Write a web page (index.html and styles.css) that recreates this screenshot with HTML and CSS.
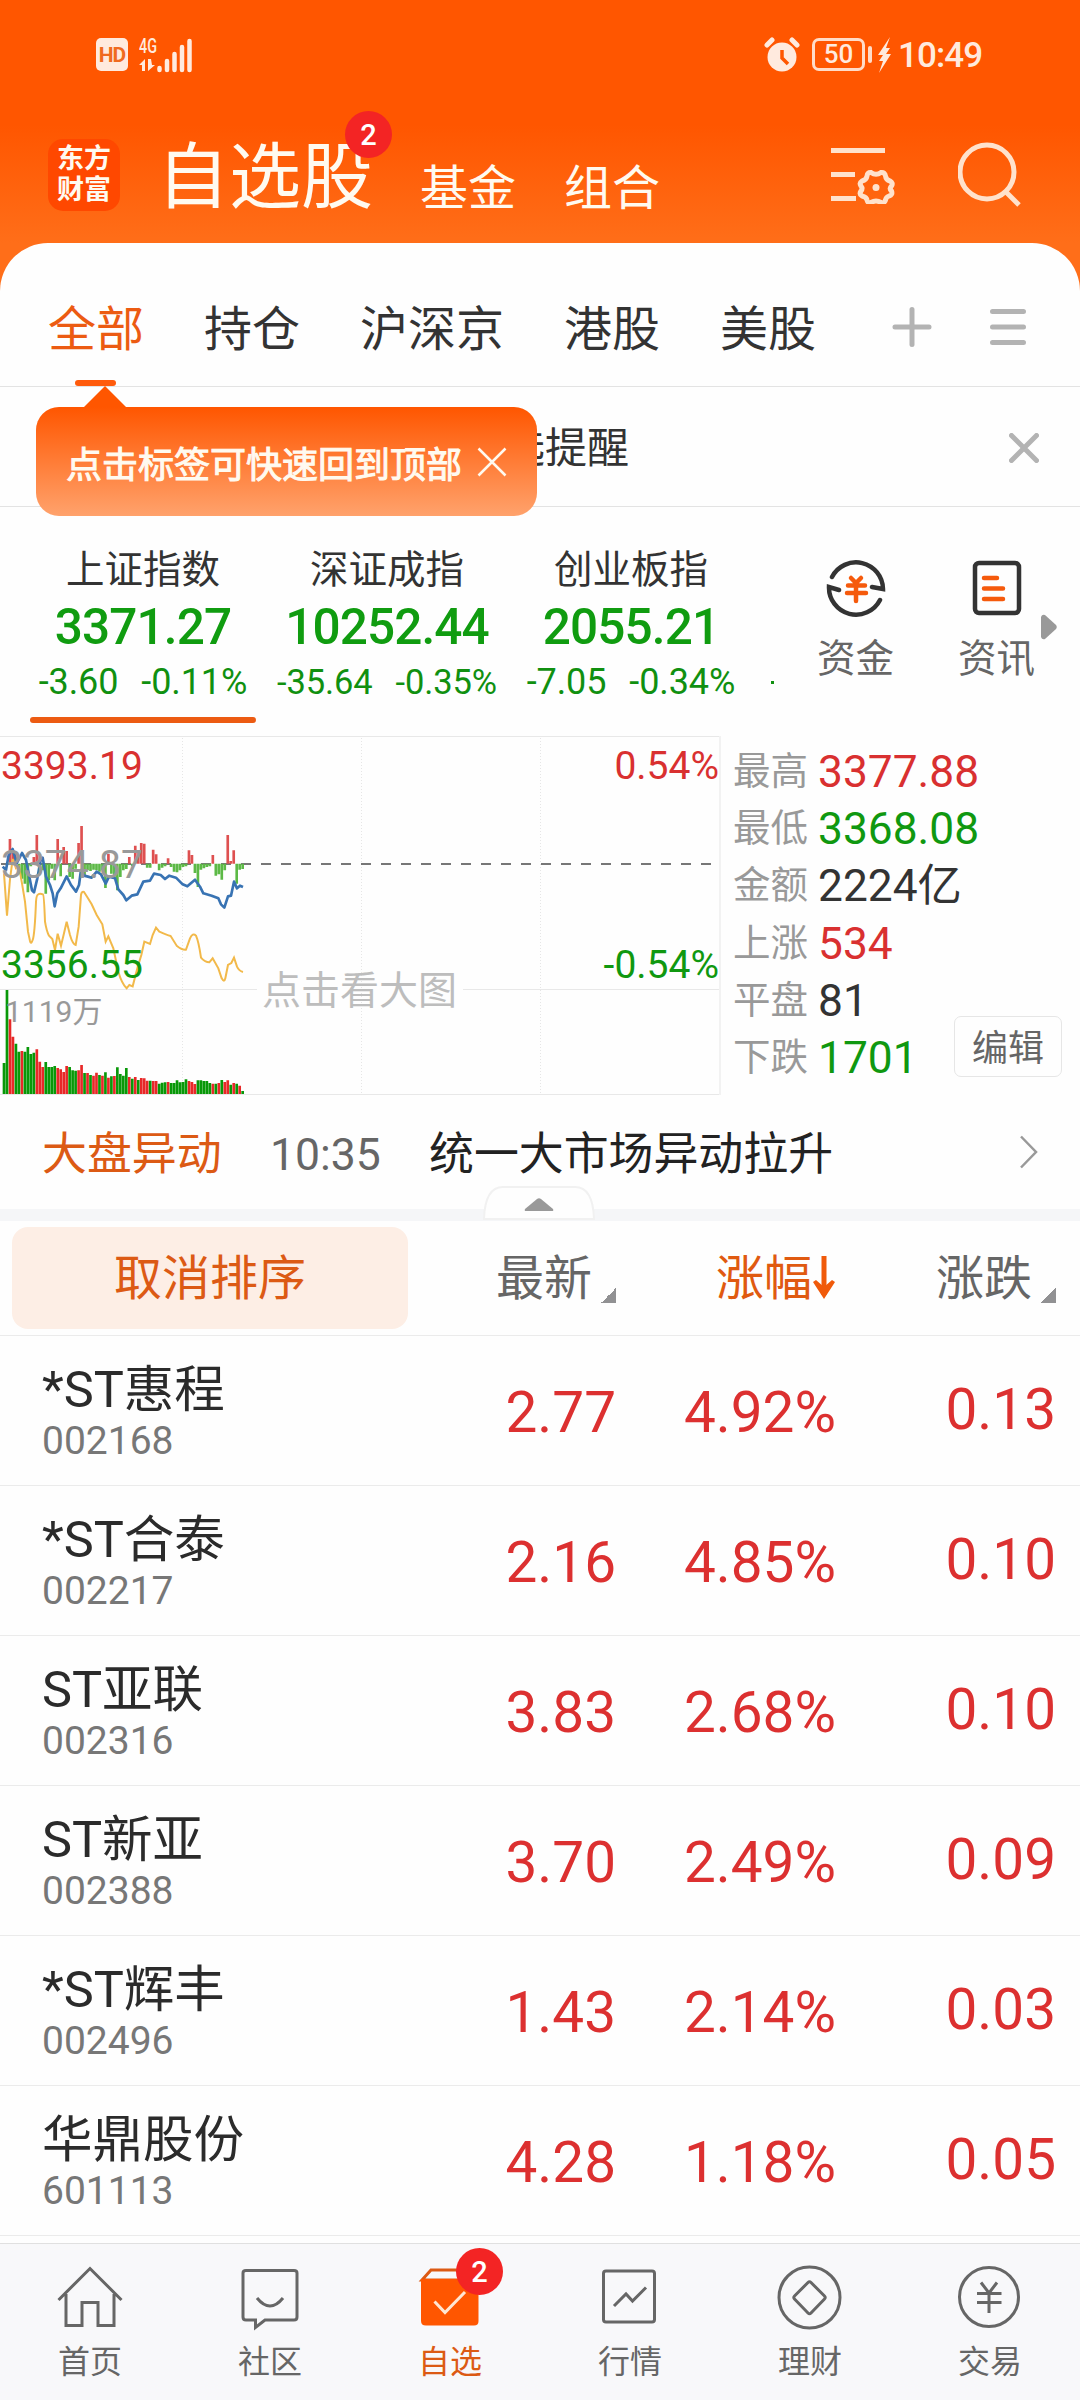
FILE: index.html
```html
<!DOCTYPE html>
<html lang="zh-CN">
<head>
<meta charset="utf-8">
<title>自选股</title>
<link rel="stylesheet" href="styles.css">
</head>
<body>
<div class="top">
  <div class="statusbar">
    <span class="hd">HD</span>
    <svg class="signal" width="54" height="40" viewBox="0 -4 54 40">
      <text x="0" y="16" textLength="18" lengthAdjust="spacingAndGlyphs">4G</text>
      <path d="M0 28l6-6v12h-3v-6zM9 22v12l7-6h-3l-1-6z"/>
      <path class="bars" d="M20.500 31v2M28 24v9M35.500 17v16M43 10v23M50.500 4v29"/>
    </svg>
    <svg class="alarm" width="36" height="36" viewBox="0 0 36 36">
      <circle cx="18" cy="20" r="14.500"/>
      <path class="ear" d="M3 8l5-5M33 8l-5-5"/>
      <path class="hand" d="M18 13v8l6 6"/>
    </svg>
    <span class="battery">50</span><i class="cap"></i>
    <svg class="bolt" width="14" height="36" viewBox="0 0 14 36"><path d="M13 0L1 18h5l-4 6h4L2 36 14 17H9l4-6H9z"/></svg>
    <span class="clock">10:49</span>
  </div>
  <div class="header">
    <div class="logo">东方<br>财富</div>
    <div class="title">自选股<b class="badge">2</b></div>
    <div class="sub">基金</div>
    <div class="sub">组合</div>
    <svg class="ico-set" width="64" height="58" viewBox="0 0 64 58">
      <path d="M0 4.500h54M0 28.500h24M0 52.500h25"/>
      <path class="gear" d="M40 26.500Q45 30 50 26.500Q54 26 54.500 30Q55 34 59 35Q62.500 37 60.500 40Q58 42.500 60.500 45Q62 49 58 50Q55 51 54.500 54Q53 58 50 56.500Q45 53.500 40 56.500Q37 58 36 54Q35.500 51 31 50Q28 48 30 45Q32 42.500 30 40Q28 37 31 35Q35.500 34 36 30Q36.500 26 40 26.500Z"/>
      <circle cx="45" cy="41.500" r="3.500"/>
    </svg>
    <svg class="ico-search" width="64" height="66" viewBox="0 0 64 66">
      <circle cx="29" cy="30" r="27"/><path d="M47 49l14 14"/>
    </svg>
  </div>
</div>

<div class="tabs">
  <span class="tab on">全部</span>
  <span class="tab">持仓</span>
  <span class="tab">沪深京</span>
  <span class="tab">港股</span>
  <span class="tab">美股</span>
  <svg class="plus" width="40" height="40" viewBox="0 0 40 40"><path d="M20 2.500v35M3 20h34"/></svg>
  <svg class="menu" width="36" height="40" viewBox="0 0 36 40"><path d="M2.500 4.500h31M2.500 20h31M2.500 35.500h31"/></svg>
</div>

<div class="notice">
  <div class="tip">
    <span>点击标签可快速回到顶部</span>
    <svg width="30" height="30" viewBox="0 0 30 30"><path d="M1.500 1.500l27 27M28.500 1.500l-27 27"/></svg>
  </div>
  <span class="notice-text">自选提醒</span>
  <svg class="close" width="30" height="30" viewBox="0 0 30 30"><path d="M2.500 2.500l25 25M27.500 2.500l-25 25"/></svg>
</div>

<div class="indices">
  <div class="index on">
    <p class="iname">上证指数</p><p class="ival">3371.27</p>
    <p class="ichg"><span>-3.60</span><span>-0.11%</span></p>
  </div>
  <div class="index">
    <p class="iname">深证成指</p><p class="ival">10252.44</p>
    <p class="ichg sm"><span>-35.64</span><span>-0.35%</span></p>
  </div>
  <div class="index">
    <p class="iname">创业板指</p><p class="ival">2055.21</p>
    <p class="ichg"><span>-7.05</span><span>-0.34%</span></p>
  </div>
  <i class="peek"></i>
  <div class="entry fund">
    <svg width="60" height="60" viewBox="0 0 60 60">
      <path d="M6 19A27 27 0 0 1 57 31L46 29M54 42A27 27 0 0 1 3 29L13 32"/>
      <path class="hot" d="M25 20l5 5 5-5M30 25v18M22 27.500h17M21 35h19"/>
    </svg>
    <span>资金</span>
  </div>
  <div class="entry info">
    <svg width="60" height="60" viewBox="0 0 60 60">
      <rect x="8" y="5" width="44" height="50" rx="4"/>
      <path class="hot" d="M17 20h13M17 30.500h19M17 41h19"/>
    </svg>
    <span>资讯</span>
  </div>
  <svg class="more" width="16" height="26" viewBox="0 0 16 26"><path d="M0 3Q1 0 4 1L15 11Q16.500 13 15 15L4 25Q1 26 0 23Z"/></svg>
</div>

<div class="market">
  <svg class="chart" width="721" height="359" viewBox="0 0 721 359">
    <path class="grid" d="M0 .500H721M0 253.500H257M463 253.500H720M0 358.500H721"/>
    <path class="dots" d="M182.500 2V358M361.500 2V358M540.500 2V358"/>
    <path class="edge" d="M720 0V359"/>
    <path class="zero" d="M1 128H712"/>
    <g transform="translate(0 -1) scale(.33333)">
      <path id="up" class="up"/>
      <path id="down" class="down"/>
      <path id="volup" class="volup"/>
      <path id="voldown" class="voldown"/>
      <path class="avg" d="M12 415L21 542L30 432L38 372L48 400L57 395L66 445L75 500L84 590L90 618Q93 630 98 615Q104 600 108 500Q109 480 115 478Q120 474 129 478Q132 480 135 560Q140 590 147 602L157 612L165 645L173 596L183 632L192 595L200 560L210 600Q218 628 227 630L236 575L243 480Q245 468 252 471L264 490L275 508L290 540L307 568L317 620L325 604L340 640L355 710Q365 745 380 760L388 750L398 754L412 700L424 660L433 620L450 627L458 600L468 578L478 590Q500 600 512 603L530 632Q545 645 558 644L570 610Q578 592 588 602Q596 620 603 668Q615 682 628 682L638 670L655 700L665 730Q673 744 676 730L684 690L694 684L702 668L711 695Q717 708 729 711"/>
      <path class="price" d="M8 395L18 405L26 360L38 342L50 385L66 354L78 375L88 425L96 466L102 472L112 430L122 375L128 368L138 425L150 450L158 475L164 514L172 475L182 460L200 424L213 450L228 470L237 450L243 405L252 422L264 425L275 428L290 410L303 418L317 446L327 425L345 430L355 463L370 480L379 496L395 482L412 478L430 440L450 437L462 416L482 420L495 432L508 422L528 428L548 448L562 454L585 434L600 455L610 475L635 482L655 490L663 508L673 518L684 484L693 482L702 440L711 460L720 452L729 456"/>
    </g>
    <text class="lab red" x="1" y="43">3393.19</text>
    <text class="lab gray" x="1" y="142">3374.87</text>
    <text class="lab green" x="1" y="242">3356.55</text>
    <text class="lab vol" x="5" y="286">1119万</text>
    <text class="lab red end" x="719" y="43">0.54%</text>
    <text class="lab green end" x="719" y="242">-0.54%</text>
    <text class="lab hint" x="262" y="268">点击看大图</text>
  </svg>
  <div class="stats">
    <p><span>最高</span><b class="red">3377.88</b></p>
    <p><span>最低</span><b class="green">3368.08</b></p>
    <p><span>金额</span><b>2224亿</b></p>
    <p><span>上涨</span><b class="red">534</b></p>
    <p><span>平盘</span><b>81</b></p>
    <p><span>下跌</span><b class="green">1701</b></p>
    <span class="edit">编辑</span>
  </div>
</div>

<div class="news">
  <span class="kind">大盘异动</span>
  <span class="time">10:35</span>
  <span class="headline">统一大市场异动拉升</span>
  <svg class="chev" width="20" height="34" viewBox="0 0 20 34"><path d="M2 1.500L17 17L2 32.500"/></svg>
</div>
<div class="band">
  <svg class="handle" width="112" height="36" viewBox="0 0 112 36">
    <path class="flap" d="M1 34Q2 2 20 2H92Q110 2 111 34Z"/>
    <path class="tri" d="M42 24L54 14Q56 12.500 58 14L70 24Q71 26 69 26H43Q41 26 42 24Z"/>
  </svg>
</div>

<div class="thead">
  <span class="cancel">取消排序</span>
  <span class="col c1">最新<i class="corner"></i></span>
  <span class="col c2">涨幅<svg width="24" height="46" viewBox="0 0 24 46"><path d="M12 1V40"/><path class="head" d="M1 27L4 25L12 32L20 25L23 27L12 44Z"/></svg></span>
  <span class="col c3">涨跌<i class="corner"></i></span>
</div>
<div class="list">
  <div class="row"><div class="stock"><p>*ST惠程</p><small>002168</small></div><span class="v1">2.77</span><span class="v2">4.92%</span><span class="v3">0.13</span></div>
  <div class="row"><div class="stock"><p>*ST合泰</p><small>002217</small></div><span class="v1">2.16</span><span class="v2">4.85%</span><span class="v3">0.10</span></div>
  <div class="row"><div class="stock"><p>ST亚联</p><small>002316</small></div><span class="v1">3.83</span><span class="v2">2.68%</span><span class="v3">0.10</span></div>
  <div class="row"><div class="stock"><p>ST新亚</p><small>002388</small></div><span class="v1">3.70</span><span class="v2">2.49%</span><span class="v3">0.09</span></div>
  <div class="row"><div class="stock"><p>*ST辉丰</p><small>002496</small></div><span class="v1">1.43</span><span class="v2">2.14%</span><span class="v3">0.03</span></div>
  <div class="row"><div class="stock"><p>华鼎股份</p><small>601113</small></div><span class="v1">4.28</span><span class="v2">1.18%</span><span class="v3">0.05</span></div>
</div>

<div class="nav">
  <div class="item">
    <svg width="68" height="68" viewBox="0 0 68 68"><path d="M2.500 37L34 5.500L65.500 37M10 31V62.500H26V39.500H42V62.500H58V31"/></svg>
    <span>首页</span>
  </div>
  <div class="item">
    <svg width="68" height="68" viewBox="0 0 68 68"><path d="M10 7.500H58Q61 7.500 61 10V54Q61 57 58 57H29L19.500 64.500V57H10Q7 57 7 54V10Q7 7.500 10 7.500ZM21 35Q34 51 47 35"/></svg>
    <span>社区</span>
  </div>
  <div class="item on">
    <svg width="68" height="68" viewBox="0 0 68 68"><path class="lid" d="M6 17L15 7H54L62 17Z"/><path class="box" d="M5 16H62.500V58Q62.500 62.500 58 62.500H10Q5 62.500 5 58Z"/><path class="tick" d="M18.500 38.500L29 49.500L49 29"/></svg>
    <span>自选</span><b class="badge">2</b>
  </div>
  <div class="item">
    <svg width="68" height="68" viewBox="0 0 68 68"><rect x="7.500" y="8" width="51" height="51" rx="2.500"/><path d="M18 43L30 31L36.500 38L50 24.500"/></svg>
    <span>行情</span>
  </div>
  <div class="item">
    <svg width="68" height="68" viewBox="0 0 68 68"><circle cx="33.500" cy="34.500" r="30.500"/><path d="M32 19.500Q33.500 18 35 19.500L48.500 33Q50 34.500 48.500 36L35 50Q33.500 51.500 32 50L18.500 36Q17 34.500 18.500 33Z"/></svg>
    <span>理财</span>
  </div>
  <div class="item">
    <svg width="68" height="68" viewBox="0 0 68 68"><circle cx="33" cy="34" r="29.500"/><path d="M25 19.500L33 30L41 19.500M33 30V50M21 30.500H45.500M21 39.500H45.500"/></svg>
    <span>交易</span>
  </div>
</div>
<script src="chart.js"></script>
</body>
</html>
```
FILE: styles.css
```css
* {
    box-sizing: border-box;
}
body {
    margin: 0;
    width: 1080px;
    height: 2400px;
    overflow: hidden;
    position: relative;
    background: #fefefe;
    color: #333;
    font-family: Roboto, "Noto Sans CJK SC", sans-serif;
}
p {
    margin: 0;
}
b {
    font-weight: normal;
}
svg {
    display: block;
    flex: none;
    fill: none;
}
.red {
    color: #d93030;
    fill: #d93030;
}
.green {
    color: #109810;
    fill: #109810;
}

/* header */
.top {
    height: 291px;
    background: linear-gradient(#ff5600 125px, #ff6e19 243px);
}
.statusbar {
    display: flex;
    align-items: center;
    height: 109px;
    padding-left: 96px;
    color: #ffeade;
}
.hd {
    width: 32px;
    height: 33px;
    border-radius: 5px;
    background: #ffeade;
    color: #f06a20;
    font-size: 21px;
    font-weight: bold;
    line-height: 34px;
    letter-spacing: -1px;
    text-align: center;
}
.signal {
    margin: -4px 0 0 11px;
    fill: #ffeade;
}
.signal text {
    font-size: 21px;
    font-weight: 500;
}
.bars {
    stroke: #ffeade;
    stroke-width: 4.5;
    stroke-linecap: round;
}
.alarm {
    margin-left: 571px;
    fill: #ffeade;
}
.ear {
    stroke: #ffeade;
    stroke-width: 5;
    stroke-linecap: round;
}
.hand {
    stroke: #ff5600;
    stroke-width: 3.5;
    fill: none;
}
.battery {
    width: 53px;
    height: 33px;
    margin-left: 12px;
    border: 3px solid #ffdcc8;
    border-radius: 7px;
    font-size: 26px;
    font-weight: 500;
    line-height: 27px;
    text-align: center;
}
.cap {
    width: 4px;
    height: 17px;
    margin-left: 3px;
    border-radius: 2px;
    background: #ffdcc8;
}
.bolt {
    margin-left: 5px;
    fill: #ffeade;
}
.clock {
    margin-left: 7px;
    padding-top: 1px;
    font-size: 35px;
    font-weight: 500;
    letter-spacing: -0.9px;
}
.header {
    display: flex;
    height: 134px;
    padding: 0 0 0 48px;
    color: #fffaf0;
}
.logo {
    width: 72px;
    height: 72px;
    margin-top: 30px;
    border-radius: 15px;
    background: #ff4800;
    font-size: 27px;
    font-weight: bold;
    line-height: 31px;
    padding-top: 5px;
    text-align: center;
}
.title {
    position: relative;
    margin: 15px 0 0 37px;
    font-size: 72px;
    line-height: 108px;
    height: 108px;
}
.badge {
    position: absolute;
    width: 47px;
    height: 47px;
    border-radius: 50%;
    background: #f32424;
    color: #fff;
    font-size: 29px;
    font-weight: 500;
    line-height: 48px;
    text-align: center;
}
.title .badge {
    left: 188px;
    top: -13px;
}
.sub {
    margin: 45px 0 0 48px;
    font-size: 48px;
    line-height: 70px;
}
.title + .sub {
    margin-left: 47px;
}
.ico-set {
    margin: 37px 0 0 171px;
    stroke: #ffe2cc;
    stroke-width: 5;
}
.ico-set circle {
    fill: #ffe2cc;
    stroke: none;
}
.ico-search {
    margin: 33px 0 0 63px;
    stroke: #ffe2cc;
    stroke-width: 5;
}

/* tabs */
.tabs {
    display: flex;
    height: 144px;
    margin-top: -48px;
    padding-left: 48px;
    border-bottom: 1px solid #e3e3e3;
    border-radius: 48px 48px 0 0;
    background: #fefefe;
    font-size: 48px;
    line-height: 174px;
}
.tab {
    margin-right: 60px;
}
.tab.on {
    position: relative;
    color: #ec5b12;
}
.tab.on::after {
    content: "";
    position: absolute;
    left: 27px;
    bottom: 0;
    width: 41px;
    height: 6px;
    border-radius: 3px;
    background: #ff5b0c;
}
.plus, .menu, .close {
    stroke: #b3b3b3;
    stroke-width: 5;
    stroke-linecap: round;
}
.plus {
    margin: 64px 0 0 16px;
}
.menu {
    margin: 64px 0 0 58px;
}

.notice {
    position: relative;
    display: flex;
    align-items: center;
    justify-content: space-between;
    height: 120px;
    padding: 0 41px 0 461px;
    border-bottom: 1px solid #e3e3e3;
    font-size: 42px;
}
.notice-text {
    margin-top: -5px;
}
.close {
    margin-top: 2px;
}
.tip {
    position: absolute;
    z-index: 1;
    left: 36px;
    top: 20px;
    display: flex;
    align-items: center;
    width: 501px;
    height: 109px;
    padding-left: 30px;
    border-radius: 23px;
    background: linear-gradient(#ff5600, #ffa26c);
    color: #fffaf0;
    font-size: 36px;
    -webkit-text-stroke: 1px #fffaf0;
}
.tip::before {
    content: "";
    position: absolute;
    left: 48px;
    top: -21px;
    border: 21px solid transparent;
    border-top: 0;
    border-bottom-color: #ff5600;
}
.tip svg {
    margin-left: 15px;
    stroke: #fffaf0;
    stroke-width: 2.5;
}

/* indices */
.indices {
    display: flex;
    height: 229px;
    padding: 38px 0 0 21px;
}
.index {
    position: relative;
    width: 244px;
    text-align: center;
}
.iname {
    font-size: 38.5px;
    line-height: 50px;
}
.ival {
    color: #109c10;
    font-size: 49.5px;
    font-weight: 500;
    letter-spacing: -0.9px;
    line-height: 64px;
    height: 62px;
}
.ichg {
    display: flex;
    justify-content: center;
    gap: 23px;
    color: #109010;
    font-size: 36px;
    letter-spacing: -0.1px;
    line-height: 50px;
}
.ichg.sm {
    font-size: 34.5px;
}
.index.on::after {
    content: "";
    position: absolute;
    left: 9px;
    top: 172px;
    width: 226px;
    height: 6px;
    border-radius: 3px;
    background: #ec5b12;
}
.peek {
    width: 3px;
    height: 3px;
    margin: 136px 0 0 18px;
    background: #109010;
}
.entry {
    width: 78px;
    margin-top: 13px;
    color: #666;
    font-size: 38.5px;
    line-height: 50px;
}
.entry svg {
    margin: 0 auto 16px;
    stroke: #333;
    stroke-width: 4.5;
    stroke-linecap: round;
}
.entry .hot {
    stroke: #f55a0c;
}
.entry.fund {
    margin-left: 43px;
}
.entry.info {
    margin-left: 63px;
}
.more {
    margin: 69px 0 0 5px;
    fill: #999;
}

/* market chart */
.market {
    display: flex;
    height: 359px;
}
.chart {
    font-size: 39px;
}
.grid {
    stroke: #e8e8e8;
}
.dots {
    stroke: #e6e6e6;
    stroke-dasharray: 1 2;
}
.edge {
    stroke: #f2f2f2;
    stroke-width: 2;
}
.zero {
    stroke: #777;
    stroke-width: 2;
    stroke-dasharray: 10 10;
}
.up, .down, .volup, .voldown {
    stroke-width: 8;
}
.up {
    stroke: #de5050;
}
.down {
    stroke: #5cb946;
}
.volup {
    stroke: #e82828;
}
.voldown {
    stroke: #089808;
}
.avg {
    stroke: #f2b94a;
    stroke-width: 6;
}
.price {
    stroke: #3873b3;
    stroke-width: 8;
    stroke-linejoin: round;
}
.lab.gray {
    fill: #999;
}
.lab.vol {
    fill: #999;
    font-size: 30px;
}
.lab.hint {
    fill: #bdbdbd;
    font-size: 39px;
}
.end {
    text-anchor: end;
}
.stats {
    position: relative;
    flex: 1;
    padding: 7px 0 0 12px;
}
.stats p {
    display: flex;
    height: 57.2px;
    line-height: 57px;
}
.stats p span {
    width: 85px;
    color: #999;
    font-size: 37.5px;
}
.stats b {
    padding-top: 1px;
    font-size: 44.3px;
}
.edit {
    position: absolute;
    right: 18px;
    bottom: 18px;
    width: 108px;
    height: 61px;
    border: 1px solid #e6e6e6;
    border-radius: 7px;
    color: #666;
    font-size: 36px;
    line-height: 64px;
    text-align: center;
}

.news {
    display: flex;
    height: 114px;
    padding: 0 41px 0 42px;
    font-size: 44.9px;
    line-height: 120px;
}
.kind {
    width: 228px;
    color: #dc5a14;
}
.time {
    width: 159px;
    color: #666;
    font-size: 44.5px;
}
.headline {
    flex: 1;
    color: #222;
}
.chev {
    margin-top: 40px;
    stroke: #999;
    stroke-width: 2.5;
}
.band {
    position: relative;
    height: 12px;
    background: #f5f6f8;
}
.handle {
    position: absolute;
    left: 483px;
    top: -24px;
}
.flap {
    fill: #fefefe;
    stroke: #f1f1f1;
    stroke-width: 2;
}
.tri {
    fill: #999;
}

/* stock list */
.thead {
    display: flex;
    height: 115px;
    padding: 6px 0 0 12px;
    border-bottom: 1px solid #ebebeb;
    color: #666;
    font-size: 48px;
    line-height: 104px;
}
.cancel {
    width: 396px;
    height: 102px;
    border-radius: 16px;
    background: #fdeee5;
    color: #dc5a14;
    text-align: center;
}
.col {
    display: flex;
}
.c1 {
    width: 220px;
    margin-left: 88px;
}
.c2 {
    width: 220px;
    color: #e05a10;
}
.c2 svg {
    margin-top: 28px;
    stroke: #f05a0a;
    stroke-width: 5;
}
.c2 .head {
    fill: #f05a0a;
    stroke: none;
}
.corner {
    margin: 61px 0 0 9px;
    width: 15px;
    height: 15px;
    background: linear-gradient(135deg, transparent 50%, #919193 50%);
}
.row {
    display: flex;
    align-items: center;
    height: 150px;
    padding: 3px 24px 0 42px;
    border-bottom: 1px solid #ebebeb;
    color: #dc3030;
    font-size: 56.7px;
}
.stock {
    width: 374px;
    height: 128px;
    color: #2b2b2b;
}
.stock p {
    font-size: 50.5px;
    line-height: 84px;
    height: 71px;
}
.stock small {
    display: block;
    color: #777;
    font-size: 39px;
    line-height: 44px;
}
.v1 {
    width: 200px;
    text-align: right;
}
.v2 {
    width: 220px;
    text-align: right;
}
.v3 {
    flex: 1;
    padding-bottom: 5px;
    text-align: right;
}

/* bottom nav */
.nav {
    position: absolute;
    left: 0;
    bottom: 0;
    display: flex;
    width: 1080px;
    height: 157px;
    border-top: 1px solid #e0e0e0;
    background: #f8f8fa;
    color: #666;
    font-size: 32px;
    line-height: 50px;
    text-align: center;
}
.item {
    position: relative;
    width: 180px;
    padding-top: 19px;
}
.item svg {
    margin: 0 auto 6px;
    stroke: #666;
    stroke-width: 3;
}
.item.on {
    color: #dc5a14;
}
.item.on .lid {
    stroke: #dc5a14;
}
.item.on .box {
    fill: #ff5600;
    stroke: none;
}
.item.on .tick {
    stroke: #ffe6d2;
}
.item .badge {
    left: 96px;
    top: 4px;
}
```
FILE: chart.js
```js
// one entry per minute: top of the volume bar, r = up, g = down
var vol = '984g 765g 853r 905r 926g 950g 948r 950g 936g 957g 953g 943r 980r 996r 981g 996g 996g 993g 999r 1003r ' +
    '1011r 993r 996g 1006g 1007g 1006r 990r 1014g 1014r 1020g 1022r 1013r 1020g 1022r 1012g 1028r 1024g 1023r 997g 1017g ' +
    '1022g 999g 1026r 1031g 1026r 1035g 1029r 1030r 1037r 1037g 1038r 1038r 1046g 1043g 1042g 1041r 1044g 1044g 1036g 1042g ' +
    '1041g 1033g 1038r 1041r 1047r 1036g 1036g 1038g 1038g 1044g 1046r 1046g 1044r 1035g 1041r 1036r 1049g 1044r 1046g 1052r 1068g';
// difference bars around the zero line
var diff = [0, 0, -74, -40, -34, 20, 45, 60, 86, 8, -20, -86, -28, 20, 90, 50, 15, 50, -74, 38,
    -50, -38, 40, 45, 15, -62, -113, 40, 20, 22, 18, 20, 24, 20, 73, -30, 30, 42, 80, 40,
    20, 16, -20, 8, -54, -35, -62, -60, 12, 12, -42, -28, 20, 12, 8, -16, 10, 24, 26, 20,
    10, 8, -40, -26, 28, 70, 18, 14, 10, 8, -26, 36, 32, 48, 20, -86, -8, -40, 60, 18, 16];

function draw(id, d) {
    document.getElementById(id).setAttribute('d', d);
}

var volup = '', voldown = '', up = '', down = '';
vol.split(' ').forEach(function (v, i) {
    var bar = 'M' + (12 + i * 8.95) + ' 1077V' + parseInt(v);
    if (v.slice(-1) == 'r') volup += bar;
    else voldown += bar;
});
diff.forEach(function (v, i) {
    var bar = 'M' + (12 + i * 8.95) + ' 386v' + v;
    if (v < 0) up += bar;
    else down += bar;
});
draw('volup', volup);
draw('voldown', voldown);
draw('up', up);
draw('down', down);
```
